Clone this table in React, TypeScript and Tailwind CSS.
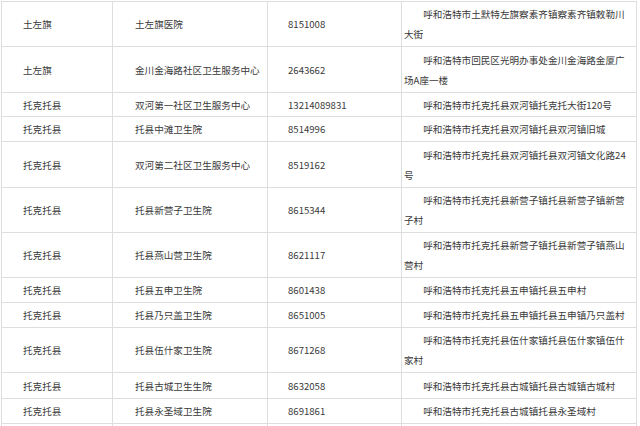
import React from "react";

type Row = { a: string; b: string; c: string; d: string; h: string };

const rows: Row[] = [
  { a: "土左旗", b: "土左旗医院", c: "8151008", d: "呼和浩特市土默特左旗察素齐镇察素齐镇敕勒川大街", h: "h-[45px]" },
  { a: "土左旗", b: "金川金海路社区卫生服务中心", c: "2643662", d: "呼和浩特市回民区光明办事处金川金海路金厦广场A座一楼", h: "h-[46px]" },
  { a: "托克托县", b: "双河第一社区卫生服务中心", c: "13214089831", d: "呼和浩特市托克托县双河镇托克托大街120号", h: "h-[24px]" },
  { a: "托克托县", b: "托县中滩卫生院", c: "8514996", d: "呼和浩特市托克托县双河镇托县双河镇旧城", h: "h-[25px]" },
  { a: "托克托县", b: "双河第二社区卫生服务中心", c: "8519162", d: "呼和浩特市托克托县双河镇托县双河镇文化路24号", h: "h-[46px]" },
  { a: "托克托县", b: "托县新营子卫生院", c: "8615344", d: "呼和浩特市托克托县新营子镇托县新营子镇新营子村", h: "h-[45px]" },
  { a: "托克托县", b: "托县燕山营卫生院", c: "8621117", d: "呼和浩特市托克托县新营子镇托县新营子镇燕山营村", h: "h-[45px]" },
  { a: "托克托县", b: "托县五申卫生院", c: "8601438", d: "呼和浩特市托克托县五申镇托县五申村", h: "h-[25px]" },
  { a: "托克托县", b: "托县乃只盖卫生院", c: "8651005", d: "呼和浩特市托克托县五申镇托县五申镇乃只盖村", h: "h-[25px]" },
  { a: "托克托县", b: "托县伍什家卫生院", c: "8671268", d: "呼和浩特市托克托县伍什家镇托县伍什家镇伍什家村", h: "h-[45px]" },
  { a: "托克托县", b: "托县古城卫生生院", c: "8632058", d: "呼和浩特市托克托县古城镇托县古城镇古城村", h: "h-[26px]" },
  { a: "托克托县", b: "托县永圣域卫生院", c: "8691861", d: "呼和浩特市托克托县古城镇托县永圣域村", h: "h-[25px]" },
  { a: "", b: "", c: "", d: "", h: "h-[25px]" },
];

const cell = "flex items-center border-r border-b border-[#dedede] text-[9.6px] leading-[20px] text-[#3a3a3a]";

export default function App() {
  return (
    <div
      className="w-[640px] h-[426px] overflow-hidden bg-white pt-[1px] pl-[1px]"
      style={{ fontFamily: '"Noto Sans CJK SC", "Noto Sans", sans-serif' }}
    >
      <div className="grid grid-cols-[111px_155px_134px_235px] w-fit border-l border-t border-[#dedede]">
        {rows.map((r, i) => (
          <React.Fragment key={i}>
            <div className={`${cell} ${r.h} pl-[21px]`}>{r.a}</div>
            <div className={`${cell} ${r.h} pl-[22px]`}>{r.b}</div>
            <div className={`${cell} ${r.h} pl-[20px]`}>{r.c}</div>
            <div className={`${cell} ${r.h} pl-[2px] pr-[2px]`}>
              <div className="indent-[2em] w-full">{r.d}</div>
            </div>
          </React.Fragment>
        ))}
      </div>
    </div>
  );
}
